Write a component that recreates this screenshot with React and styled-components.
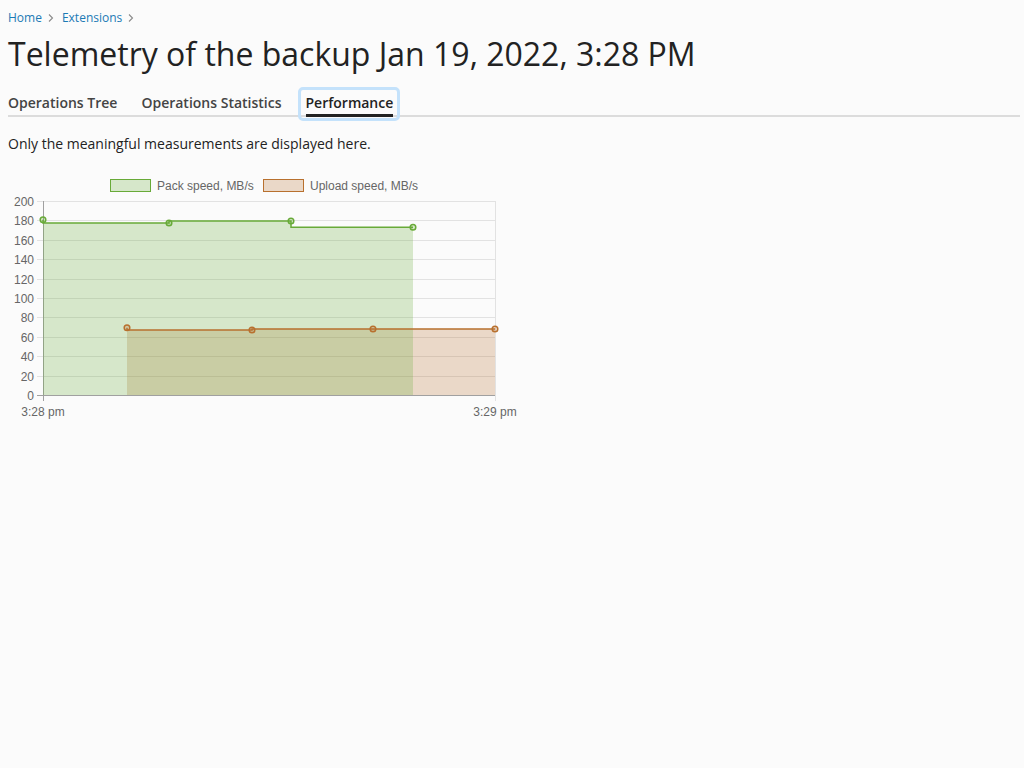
import React from "react";
import styled, { createGlobalStyle } from "styled-components";

const Global = createGlobalStyle`
  html, body { margin: 0; padding: 0; background: #fbfbfb; }
  body { font-family: "Open Sans", "Noto Sans", sans-serif; color: #222; }
`;

const Page = styled.div`
  padding: 0 4px 0 8px;
`;

const Crumbs = styled.nav`
  display: flex;
  align-items: center;
  gap: 5px;
  margin-top: 10px;
  font-size: 12px;
  line-height: 16px;
`;

const Crumb = styled.a`
  color: #1b7ab5;
  text-decoration: none;
`;

const ChevronIcon = styled.svg`
  display: block;
  margin: 0 2px 0 0;
`;

const Chevron = () => (
  <ChevronIcon width="8" height="10" viewBox="0 0 8 10">
    <path d="M2 1.5 L5.5 5 L2 8.5" fill="none" stroke="#8a8a8a" strokeWidth="1.1" />
  </ChevronIcon>
);

const Title = styled.h1`
  margin: 8px 0 0;
  font-size: 32px;
  line-height: 40px;
  font-weight: 400;
  color: #222;
`;

const TabBar = styled.div`
  display: flex;
  gap: 24px;
  margin-top: 19px;
  border-bottom: 2px solid #dcdcdc;
`;

const Tab = styled.div`
  position: relative;
  font-size: 14px;
  line-height: 20px;
  font-weight: 600;
  color: ${(p) => (p.$active ? "#222" : "#444")};
  padding-bottom: 2px;
  ${(p) =>
    p.$active &&
    `
    &::before {
      content: "";
      position: absolute;
      left: 0; right: 0; bottom: -2px;
      height: 3px;
      background: #222;
    }
    &::after {
      content: "";
      position: absolute;
      left: -8px; right: -7px; top: -6px; bottom: -6px;
      border: 3px solid #c4e2fb;
      border-radius: 5px;
    }
  `}
`;

const Note = styled.p`
  margin: 17px 0 0;
  font-size: 14px;
  line-height: 20px;
  color: #222;
`;

const ChartWrap = styled.div`
  margin-top: 11px;
  width: 512px;
  height: 260px;
`;

const AX = "Liberation Sans, Arial, sans-serif";

const Chart = () => {
  const top = 201;
  const bottom = 395;
  const left = 43;
  const right = 495;
  const step = (bottom - top) / 10;
  const ticks = Array.from({ length: 11 }, (_, i) => i);
  const green = "rgb(104,170,56)";
  const greenFill = "rgba(104,170,56,0.25)";
  const brown = "rgb(184,112,46)";
  const brownFill = "rgba(184,112,46,0.25)";
  const packPts = [[43, 219.8], [169, 223], [291, 221], [413, 227.3]];
  const upPts = [[127, 327.7], [252, 330], [373, 329], [495, 329]];
  const stepLine = (pts) => {
    let d = `M${pts[0][0]},${pts[0][1]}`;
    for (let i = 1; i < pts.length; i++) {
      d += ` V${pts[i][1]} H${pts[i][0]}`;
    }
    return d;
  };
  const packLine = stepLine(packPts);
  const upLine = stepLine(upPts);
  return (
    <svg width="512" height="260" viewBox="0 0 512 260">
      <g transform="translate(-8,-165)">
        {/* legend */}
        <rect x="110.5" y="179.5" width="40" height="12" fill={greenFill} stroke={green} strokeWidth="1" />
        <text x="157" y="189.5" fontFamily={AX} fontSize="12" fill="#666">Pack speed, MB/s</text>
        <rect x="263.5" y="179.5" width="40" height="12" fill={brownFill} stroke={brown} strokeWidth="1" />
        <text x="310" y="189.5" fontFamily={AX} fontSize="12" fill="#666">Upload speed, MB/s</text>

        {/* grid */}
        {ticks.map((i) => {
          const y = Math.round(top + i * step) + 0.5;
          return (
            <g key={i}>
              <line x1="37" x2={right} y1={y} y2={y} stroke={i === 10 ? "#a0a0a0" : "#e2e2e2"} strokeWidth="1" />
              <text x="34" y={y + 4} textAnchor="end" fontFamily={AX} fontSize="12" fill="#666">
                {200 - i * 20}
              </text>
            </g>
          );
        })}
        <line x1={right + 0.5} x2={right + 0.5} y1={top} y2={bottom + 6} stroke="#e2e2e2" />
        <line x1={left + 0.5} x2={left + 0.5} y1={top} y2={bottom + 6} stroke="#a0a0a0" />

        {/* fills */}
        <path d={`${upLine} V${bottom} H${upPts[0][0]} Z`} fill={brownFill} />
        <path d={`${packLine} V${bottom} H${packPts[0][0]} Z`} fill={greenFill} />
        <path d={upLine} fill="none" stroke={brown} strokeWidth="1.5" />
        <path d={packLine} fill="none" stroke={green} strokeWidth="1.5" />
        {upPts.map(([x, y], i) => (
          <circle key={"u" + i} cx={x} cy={y} r="2.8" fill={brownFill} stroke={brown} strokeWidth="1.5" />
        ))}
        {packPts.map(([x, y], i) => (
          <circle key={"p" + i} cx={x} cy={y} r="2.8" fill={greenFill} stroke={green} strokeWidth="1.5" />
        ))}

        {/* x labels */}
        <text x={left} y="416" textAnchor="middle" fontFamily={AX} fontSize="12" fill="#666">3:28 pm</text>
        <text x={right} y="416" textAnchor="middle" fontFamily={AX} fontSize="12" fill="#666">3:29 pm</text>
      </g>
    </svg>
  );
};

export default function App() {
  return (
    <>
      <Global />
      <Page>
        <Crumbs>
          <Crumb href="#">Home</Crumb>
          <Chevron />
          <Crumb href="#">Extensions</Crumb>
          <Chevron />
        </Crumbs>
        <Title>Telemetry of the backup Jan 19, 2022, 3:28 PM</Title>
        <TabBar>
          <Tab>Operations Tree</Tab>
          <Tab>Operations Statistics</Tab>
          <Tab $active>Performance</Tab>
        </TabBar>
        <Note>Only the meaningful measurements are displayed here.</Note>
        <ChartWrap>
          <Chart />
        </ChartWrap>
      </Page>
    </>
  );
}
